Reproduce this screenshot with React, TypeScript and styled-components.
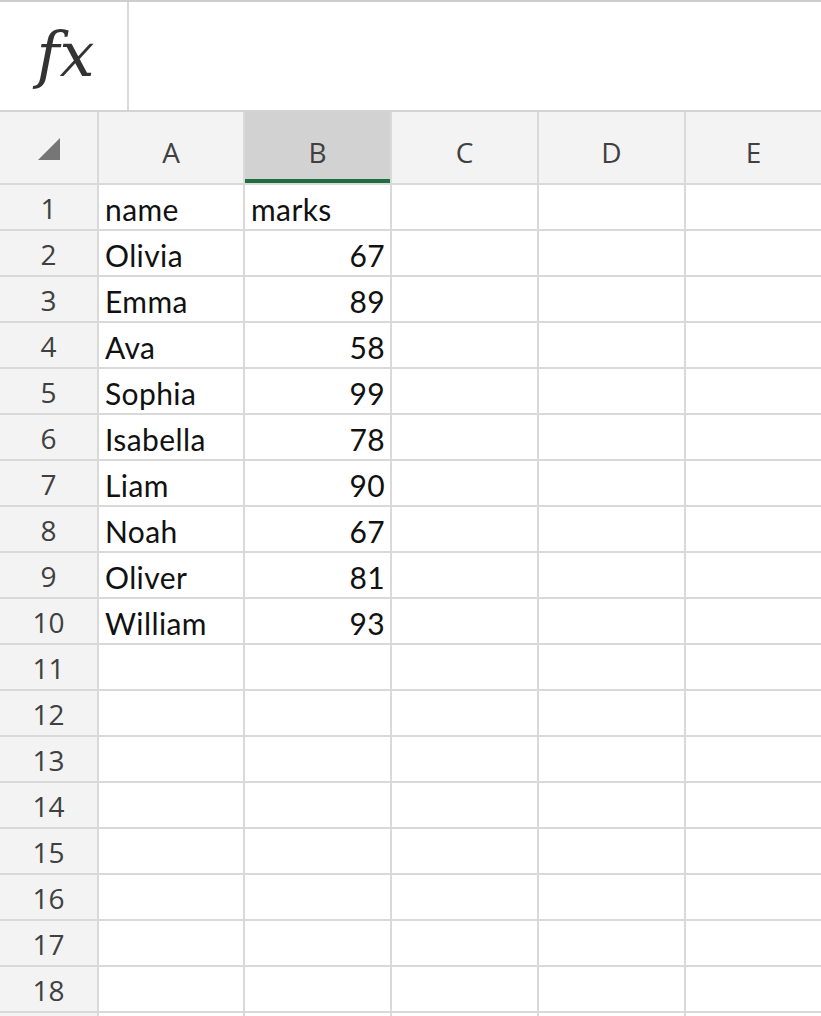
import styled, { createGlobalStyle } from "styled-components";

const GlobalStyle = createGlobalStyle`
  html, body {
    margin: 0;
    padding: 0;
    background: #ffffff;
    overflow: hidden;
  }
`;

const Page = styled.div`
  width: 821px;
  height: 1016px;
  overflow: hidden;
  background: #ffffff;
`;

const FormulaBar = styled.div`
  display: flex;
  height: 108px;
  border-top: 2px solid #cdcdcd;
  border-bottom: 2px solid #d4d4d4;
`;

const FxBox = styled.div`
  width: 129px;
  border-right: 2px solid #dadada;
  display: flex;
  align-items: center;
  justify-content: center;
  font-family: "DejaVu Serif", "Liberation Serif", serif;
  font-style: italic;
  font-size: 62px;
  color: #333333;
  padding: 0 0 4px 4px;
  box-sizing: border-box;
`;

const FormulaInput = styled.div`
  flex: 1;
`;

const Sheet = styled.div`
  display: grid;
  grid-template-columns: 97px 144px 145px 145px 145px 135px;
  grid-template-rows: 71px;
  grid-auto-rows: 44px;
  gap: 2px;
  background: #d9d9d9;
`;

const Corner = styled.div`
  background: #f3f3f3;
  position: relative;
`;

const CornerTriangle = styled.div`
  position: absolute;
  left: 38px;
  top: 26px;
  width: 0;
  height: 0;
  border-left: 22px solid transparent;
  border-bottom: 22px solid #767676;
`;

const ColHeader = styled.div<{ $selected?: boolean }>`
  background: ${(p) => (p.$selected ? "#d2d2d2" : "#f3f3f3")};
  box-shadow: ${(p) => (p.$selected ? "inset 0 -4px 0 #1e6e42" : "none")};
  display: flex;
  align-items: center;
  justify-content: center;
  padding-top: 8px;
  box-sizing: border-box;
  font-family: "Open Sans", "Noto Sans", sans-serif;
  font-size: 28px;
  color: #404040;
`;

const RowHeader = styled.div`
  background: #f3f3f3;
  display: flex;
  align-items: center;
  justify-content: center;
  padding-top: 2px;
  box-sizing: border-box;
  font-family: "Open Sans", "Noto Sans", sans-serif;
  font-size: 28px;
  color: #404040;
`;

const Cell = styled.div<{ $numeric?: boolean }>`
  background: #ffffff;
  display: flex;
  align-items: flex-end;
  justify-content: ${(p) => (p.$numeric ? "flex-end" : "flex-start")};
  padding: 0 5px 2px 6px;
  box-sizing: border-box;
  font-family: "Lato", "Liberation Sans", sans-serif;
  font-size: 30px;
  letter-spacing: 0.4px;
  color: #111111;
  white-space: nowrap;
  overflow: hidden;
`;

const columns = ["A", "B", "C", "D", "E"];

const data: [string, string][] = [
  ["name", "marks"],
  ["Olivia", "67"],
  ["Emma", "89"],
  ["Ava", "58"],
  ["Sophia", "99"],
  ["Isabella", "78"],
  ["Liam", "90"],
  ["Noah", "67"],
  ["Oliver", "81"],
  ["William", "93"],
];

export default function App() {
  const rows = Array.from({ length: 19 }, (_, i) => i + 1);
  return (
    <Page>
      <GlobalStyle />
      <FormulaBar>
        <FxBox>fx</FxBox>
        <FormulaInput />
      </FormulaBar>
      <Sheet>
        <Corner>
          <CornerTriangle />
        </Corner>
        {columns.map((c) => (
          <ColHeader key={c} $selected={c === "B"}>
            {c}
          </ColHeader>
        ))}
        {rows.map((r) => {
          const row = data[r - 1];
          return [
            <RowHeader key={`h${r}`}>{r < 19 ? r : ""}</RowHeader>,
            <Cell key={`a${r}`}>{row ? row[0] : ""}</Cell>,
            <Cell key={`b${r}`} $numeric={r > 1}>
              {row ? row[1] : ""}
            </Cell>,
            <Cell key={`c${r}`} />,
            <Cell key={`d${r}`} />,
            <Cell key={`e${r}`} />,
          ];
        })}
      </Sheet>
    </Page>
  );
}
